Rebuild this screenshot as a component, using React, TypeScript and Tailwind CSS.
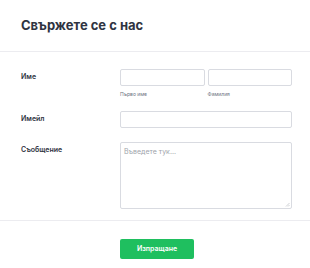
export default function App() {
  return (
    <div className="w-[310px] h-[268px] bg-white overflow-hidden" style={{ fontFamily: "Inter, 'Noto Sans', sans-serif" }}>
      <div className="h-[52px] border-b border-[#ececf0] px-[21px] flex items-center">
        <h1 className="text-[13px] leading-none font-bold text-[#2f3442]">Свържете се с нас</h1>
      </div>
      <div className="pt-[17px] pl-[21px] pr-[18px] flex flex-col gap-[14px]">
        <div className="flex">
          <div className="w-[99px] h-[17px] flex items-center text-[7px] font-semibold text-[#2f3442]">Име</div>
          <div className="flex-1 flex gap-[3px]">
            <div className="flex-1 flex flex-col">
              <div className="h-[17px] border border-[#d9dbe1] rounded-[2px]" />
              <div className="mt-[5px] text-[5px] text-[#6b7280] leading-[6px]">Първо име</div>
            </div>
            <div className="flex-1 flex flex-col">
              <div className="h-[17px] border border-[#d9dbe1] rounded-[2px]" />
              <div className="mt-[5px] text-[5px] text-[#6b7280] leading-[6px]">Фамилия</div>
            </div>
          </div>
        </div>
        <div className="flex">
          <div className="w-[99px] h-[17px] flex items-center text-[7px] font-semibold text-[#2f3442]">Имейл</div>
          <div className="flex-1 h-[17px] border border-[#d9dbe1] rounded-[2px]" />
        </div>
        <div className="flex">
          <div className="w-[99px] h-[17px] flex items-center text-[7px] font-semibold text-[#2f3442]">Съобщение</div>
          <div className="flex-1 h-[67px] border border-[#d9dbe1] rounded-[2px] relative px-[3px] pt-[4px] text-[7px] text-[#a0a4ab] leading-[9px]">
            Въведете тук...
            <svg className="absolute right-[1px] bottom-[1px]" width="5" height="5" viewBox="0 0 5 5">
              <path d="M4.5 1 L1 4.5 M4.5 3 L3 4.5" stroke="#b0b3ba" strokeWidth="0.6" />
            </svg>
          </div>
        </div>
      </div>
      <div className="mt-[11px] border-t border-[#ececf0] pt-[12px] pl-[120px]">
        <button className="w-[74px] h-[20px] rounded-[2px] bg-[#1fbf5f] text-white text-[7px] font-semibold">Изпращане</button>
      </div>
    </div>
  );
}
